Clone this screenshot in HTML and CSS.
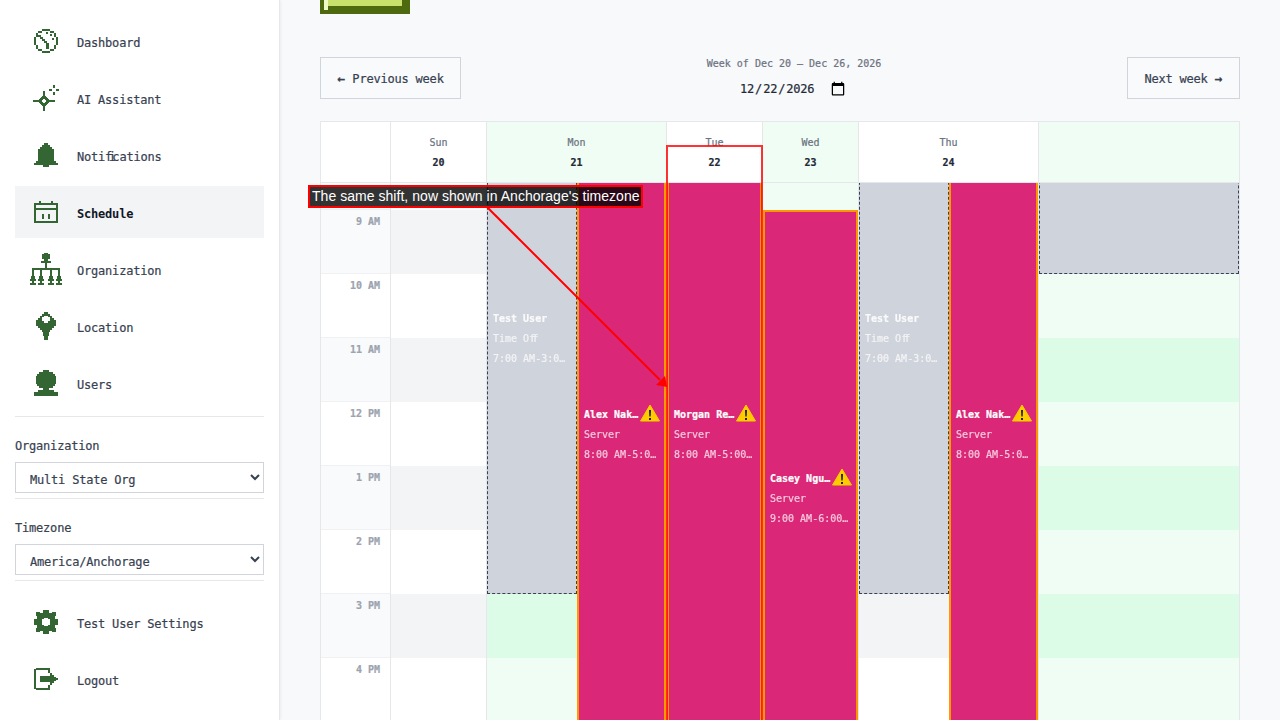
FILE: index.html
```html
<!DOCTYPE html>
<html lang="en">

<head>
  <meta charset="UTF-8" />
  <meta name="viewport" content="width=device-width, initial-scale=1" />
  <title>Schedule</title>
  <link rel="stylesheet" href="styles.css">
</head>

<body>
  <aside class="sidebar">
    <nav class="nav">
      <a class="nav-item" href="#">
        <span class="nav-icon"><svg class="icon" width="24" height="24" viewBox="0 0 24 24"><path d="M8 0h8v2H8zM4 2h4v2H4zM16 2h4v2h-4zM2 4h2v4H2zM20 4h2v4h-2zM0 8h2v8H0zM22 8h2v8h-2zM2 16h2v4H2zM20 16h2v4h-2zM4 20h4v2H4zM16 20h4v2h-4zM8 22h8v2H8zM4 6h3v2H4zM6 8h3v2H6zM8 10h3v2H8zM10 12h3v2h-3zM12 14h3v6h-3zM16 5h2v2h-2zM18 9h2v2h-2zM12 3h2v2h-2z"/></svg></span>
        <span>Dashboard</span>
      </a>
      <a class="nav-item" href="#">
        <span class="nav-icon"><svg class="icon" width="26" height="26" viewBox="0 0 26 26"><path d="M10 6h2v5h1v1h1v1h1v1h1v1h6v2h-6v1h-1v1h-1v1h-1v1h-1v5h-2v-5H9v-1H8v-1H7v-1H6v-1H0v-2h6v-1h1v-1h1v-1h1v-1h1zM20 0h2v3h-2zM20 7h2v3h-2zM16 4h3v2h-3zM23 4h3v2h-3z"/><path class="icon-hole" d="M10 14h2v1h1v2h-1v1h-2v-1H9v-2h1z"/></svg></span>
        <span>AI Assistant</span>
      </a>
      <a class="nav-item" href="#">
        <span class="nav-icon"><svg class="icon" width="24" height="24" viewBox="0 0 24 24"><path d="M10 0h4v2h-4zM8 2h8v2H8zM6 4h12v2H6zM4 6h16v12H4zM2 18h20v2H2zM0 20h24v2H0zM9 22h6v2H9z"/></svg></span>
        <span>Noti<span class="lig">fi</span>cations</span>
      </a>
      <a class="nav-item active" href="#">
        <span class="nav-icon"><svg class="icon" width="24" height="22" viewBox="0 0 24 22"><path d="M5 0h2v3H5zM17 0h2v3h-2zM0 2h24v2H0zM0 4h2v18H0zM22 4h2v18h-2zM2 20h20v2H2zM2 7h20v2H2zM8 13h2v5H8zM14 13h2v5h-2z"/></svg></span>
        <span>Schedule</span>
      </a>
      <a class="nav-item" href="#">
        <span class="nav-icon"><svg class="icon" width="32" height="32" viewBox="0 0 32 32"><path d="M14 0h4v1h-4zM12 1h8v5h-8zM14 6h4v2h-4zM11 8h10v2H11zM15 10h2v5h-2zM2 15h28v2H2zM2 17h2v6H2zM10 17h2v6h-2zM20 17h2v6h-2zM28 17h2v6h-2zM1 23h4v3H1zM0 26h6v2H0zM2 28h2v2H2zM0 30h6v2H0zM9 23h4v3H9zM8 26h6v2H8zM10 28h2v2h-2zM8 30h6v2H8zM19 23h4v3h-4zM18 26h6v2h-6zM20 28h2v2h-2zM18 30h6v2h-6zM27 23h4v3h-4zM26 26h6v2h-6zM28 28h2v2h-2zM26 30h6v2h-6z"/></svg></span>
        <span>Organization</span>
      </a>
      <a class="nav-item" href="#">
        <span class="nav-icon"><svg class="icon" width="20" height="28" viewBox="0 0 20 28"><path fill-rule="evenodd" d="M8 0h4v2h2v2h2v2h2v2h2v6h-2v2h-2v2h-2v2h-1v4h-1v4H8v-4H7v-4H6v-2H4v-2H2v-2H0V8h2V6h2V4h2V2h2zM8 4v1H6v4h2v2h4V9h2V5h-2V4z"/></svg></span>
        <span>Location</span>
      </a>
      <a class="nav-item" href="#">
        <span class="nav-icon"><svg class="icon" width="24" height="26" viewBox="0 0 24 26"><path d="M9 0h6v2H9zM5 2h14v2H5zM3 4h18v2H3zM2 6h20v8H2zM3 14h18v2H3zM5 16h14v2H5zM9 18h6v2H9zM4 20h16v2H4zM0 22h24v4H0z"/></svg></span>
        <span>Users</span>
      </a>
    </nav>

    <div class="filter">
      <label class="filter-label" for="org">Organization</label>
      <select class="filter-select" id="org">
        <option>Multi State Org</option>
      </select>
    </div>
    <div class="filter">
      <label class="filter-label" for="tz">Timezone</label>
      <select class="filter-select" id="tz">
        <option>America/Anchorage</option>
      </select>
    </div>

    <nav class="nav nav-bottom">
      <a class="nav-item" href="#">
        <span class="nav-icon"><svg class="icon" width="24" height="24" viewBox="0 0 24 24"><path fill-rule="evenodd" d="M9 0h6v3h3V2h4v4h-1v3h3v6h-3v3h1v4h-4v-1h-3v3H9v-3H6v1H2v-4h1v-3H0V9h3V6H2V2h4v1h3zM10 8v1H8v6h2v1h4v-1h2V9h-2V8z"/></svg></span>
        <span>Test User Settings</span>
      </a>
      <a class="nav-item" href="#">
        <span class="nav-icon"><svg class="icon" width="24" height="22" viewBox="0 0 24 22"><path d="M2 0h14v2H2zM0 1h2v20H0zM2 20h14v2H2zM14 2h2v3h-2zM14 17h2v3h-2zM6 8h10v6H6zM16 5h2v12h-2zM18 7h2v8h-2zM20 9h2v4h-2zM22 10h2v2h-2z"/></svg></span>
        <span>Logout</span>
      </a>
    </nav>
  </aside>

  <main class="main">
    <svg class="logo" width="90" height="14" viewBox="0 0 90 14">
      <rect width="90" height="14" fill="#4d6a0f" />
      <rect x="4" width="4" height="10" fill="#f2f9c9" />
      <rect x="8" width="74" height="6" fill="#c8e06c" />
    </svg>

    <div class="toolbar">
      <button class="week-btn"><span class="arrow">←</span> Previous week</button>
      <div class="week-picker">
        <div class="week-label">Week of Dec 20 – Dec 26, 2026</div>
        <input class="week-date" type="date" value="2026-12-22" />
      </div>
      <button class="week-btn">Next week <span class="arrow">→</span></button>
    </div>

    <section class="calendar">
      <div class="cal-head">
        <div class="head-cell"></div>
        <div class="head-cell">
          <span class="head-day">Sun</span><span class="head-num">20</span>
        </div>
        <div class="head-cell green">
          <span class="head-day">Mon</span><span class="head-num">21</span>
        </div>
        <div class="head-cell">
          <span class="head-day">Tue</span><span class="head-num">22</span>
        </div>
        <div class="head-cell green">
          <span class="head-day">Wed</span><span class="head-num">23</span>
        </div>
        <div class="head-cell">
          <span class="head-day">Thu</span><span class="head-num">24</span>
        </div>
        <div class="head-cell green"></div>
      </div>

      <div class="cal-body">
        <div class="cal-scroll">
          <div class="times">
            <div class="time-slot"></div>
            <div class="time-slot">9 AM</div>
            <div class="time-slot">10 AM</div>
            <div class="time-slot">11 AM</div>
            <div class="time-slot">12 PM</div>
            <div class="time-slot">1 PM</div>
            <div class="time-slot">2 PM</div>
            <div class="time-slot">3 PM</div>
            <div class="time-slot">4 PM</div>
          </div>

          <div class="day"></div>

          <div class="day green">
            <div class="event off left-half off-morning">
              <span class="ev-name">Test User</span>
              <span class="ev-line">Time O<span class="lig">ff</span></span>
              <span class="ev-line">7:00 AM-3:0…</span>
            </div>
            <div class="event shift right-half shift-eight">
              <div class="ev-head">
                <span class="ev-name">Alex Nak…</span>
                <svg class="warn" width="20" height="18" viewBox="0 0 20 18"><path d="M10 1 19.5 17H.5z" fill="#ffcc00" stroke="#ffcc00" stroke-linejoin="round" /><path d="M9 6h2l-.3 6.500H9.300zM9 14h2v2H9z" fill="#222" /></svg>
              </div>
              <span class="ev-line">Server</span>
              <span class="ev-line">8:00 AM-5:0…</span>
            </div>
          </div>

          <div class="day">
            <div class="event shift whole shift-eight">
              <div class="ev-head">
                <span class="ev-name">Morgan Re…</span>
                <svg class="warn" width="20" height="18" viewBox="0 0 20 18"><path d="M10 1 19.5 17H.5z" fill="#ffcc00" stroke="#ffcc00" stroke-linejoin="round" /><path d="M9 6h2l-.3 6.500H9.300zM9 14h2v2H9z" fill="#222" /></svg>
              </div>
              <span class="ev-line">Server</span>
              <span class="ev-line">8:00 AM-5:00…</span>
            </div>
          </div>

          <div class="day green">
            <div class="event shift whole shift-nine">
              <div class="ev-head">
                <span class="ev-name">Casey Ngu…</span>
                <svg class="warn" width="20" height="18" viewBox="0 0 20 18"><path d="M10 1 19.5 17H.5z" fill="#ffcc00" stroke="#ffcc00" stroke-linejoin="round" /><path d="M9 6h2l-.3 6.500H9.300zM9 14h2v2H9z" fill="#222" /></svg>
              </div>
              <span class="ev-line">Server</span>
              <span class="ev-line">9:00 AM-6:00…</span>
            </div>
          </div>

          <div class="day">
            <div class="event off left-half off-morning">
              <span class="ev-name">Test User</span>
              <span class="ev-line">Time O<span class="lig">ff</span></span>
              <span class="ev-line">7:00 AM-3:0…</span>
            </div>
            <div class="event shift right-half shift-eight">
              <div class="ev-head">
                <span class="ev-name">Alex Nak…</span>
                <svg class="warn" width="20" height="18" viewBox="0 0 20 18"><path d="M10 1 19.5 17H.5z" fill="#ffcc00" stroke="#ffcc00" stroke-linejoin="round" /><path d="M9 6h2l-.3 6.500H9.300zM9 14h2v2H9z" fill="#222" /></svg>
              </div>
              <span class="ev-line">Server</span>
              <span class="ev-line">8:00 AM-5:0…</span>
            </div>
          </div>

          <div class="day green day-last">
            <div class="event off full-width off-early"></div>
          </div>
        </div>
      </div>
    </section>
  </main>

  <!-- annotation drawn over the page -->
  <div class="note-box"></div>
  <svg class="note-arrow" width="1280" height="720" viewBox="0 0 1280 720">
    <line x1="487" y1="207" x2="660" y2="380" stroke="#ff0000" stroke-width="2" />
    <polygon points="667,387 656,385 665,376" fill="#ff0000" />
  </svg>
  <div class="note-label">The same shift, now shown in Anchorage's timezone</div>
</body>

</html>
```

FILE: styles.css
```css
* {
  box-sizing: border-box;
}

html,
body {
  height: 720px;
  margin: 0;
  overflow: hidden;
}

body {
  display: flex;
  font-family: "DejaVu Sans Mono", "Liberation Mono", monospace;
  font-size: 12px;
  letter-spacing: -0.2px;
  -webkit-text-stroke: 0.2px;
  color: #374151;
  background-color: #f8f9fb;
}

.lig {
  letter-spacing: -0.3em;
}

/* sidebar */
.sidebar {
  width: 280px;
  height: 720px;
  flex-shrink: 0;
  padding: 15px 15px 0;
  background-color: #fff;
  border-right: 1px solid #e5e7eb;
  box-shadow: 1px 0 3px rgba(0, 0, 0, 0.05);
}

.nav {
  display: flex;
  flex-direction: column;
  gap: 5px;
}

.nav-bottom {
  margin-top: 15px;
}

.nav-item {
  display: flex;
  align-items: center;
  gap: 15px;
  height: 52px;
  padding-left: 15px;
  padding-top: 4px;
  color: #374151;
  text-decoration: none;
}

.nav-item.active {
  background-color: #f3f4f6;
  color: #111827;
  font-weight: bold;
  -webkit-text-stroke: 0;
}

.nav-icon {
  display: flex;
  justify-content: center;
  align-items: center;
  width: 32px;
  margin-top: -4px;
}

.icon {
  fill: #336633;
  shape-rendering: crispEdges;
}

.icon-hole {
  fill: #fff;
}

.filter {
  margin-top: 7px;
  padding: 21px 0 5px;
  border-top: 1px solid #e5e7eb;
}

.filter + .filter {
  margin-top: 0;
  border-bottom: 1px solid #e5e7eb;
}

.filter-label {
  display: block;
  height: 14px;
  line-height: 16px;
  margin-bottom: 10px;
}

.filter-select {
  display: block;
  width: 100%;
  height: 31px;
  padding: 4px 10px 0;
  font-family: inherit;
  font-size: 12px;
  letter-spacing: inherit;
  -webkit-text-stroke: inherit;
  color: #374151;
  background-color: #fff;
  border: 1px solid #d1d5db;
  border-radius: 0;
}

/* main area */
.main {
  flex: 1;
  min-width: 0;
  height: 720px;
  padding: 0 40px;
  overflow: hidden;
}

.logo {
  display: block;
}

.toolbar {
  display: flex;
  justify-content: space-between;
  align-items: flex-start;
  height: 42px;
  margin: 43px 0 22px;
}

.week-btn {
  height: 42px;
  padding: 0 16.5px;
  font-family: inherit;
  font-size: 12px;
  letter-spacing: inherit;
  -webkit-text-stroke: inherit;
  color: #374151;
  background-color: #f9fafb;
  border: 1px solid #d1d5db;
}

.arrow {
  font-size: 13px;
  font-weight: bold;
  letter-spacing: 0;
}

.week-picker {
  display: flex;
  flex-direction: column;
  align-items: center;
}

.week-label {
  margin-top: 1px;
  font-size: 10px;
  line-height: 12px;
  letter-spacing: 0;
  color: #6b7280;
}

.week-date {
  margin: 7px 3px 0 0;
  height: 24px;
  padding: 0;
  font-family: inherit;
  font-size: 12px;
  letter-spacing: inherit;
  -webkit-text-stroke: inherit;
  color: #1f2937;
  background: transparent;
  border: none;
}

.week-date::-webkit-calendar-picker-indicator {
  width: 16px;
  height: 16px;
  margin-left: 0;
  padding: 0;
  filter: contrast(3);
}

/* calendar */
.calendar {
  border: 1px solid #e5e7eb;
  border-bottom: none;
  letter-spacing: 0;
}

.cal-head {
  display: grid;
  grid-template-columns: 70px 96px 180px 96px 96px 180px 200px;
  height: 61px;
  border-bottom: 1px solid #e5e7eb;
  background-color: #fff;
}

.head-cell {
  display: flex;
  flex-direction: column;
  align-items: center;
  padding-top: 14px;
  border-right: 1px solid #e5e7eb;
  font-size: 10px;
}

.head-cell:last-child {
  border-right: none;
}

.head-cell.green {
  background-color: #f0fdf4;
}

.head-day {
  line-height: 14px;
  color: #6b7280;
}

.head-num {
  margin-top: 6px;
  line-height: 14px;
  font-weight: bold;
  color: #1f2937;
}

.cal-body {
  height: 540px;
  overflow: hidden;
}

.cal-scroll {
  display: grid;
  grid-template-columns: 70px 96px 180px 96px 96px 180px 200px;
  height: 640px;
  margin-top: -37px;
}

.times {
  border-right: 1px solid #e5e7eb;
  background-color: #fff;
}

.time-slot {
  height: 64px;
  padding: 6px 10px 0 0;
  border-bottom: 1px solid #f0f1f3;
  font-size: 10px;
  font-weight: bold;
  line-height: 12px;
  text-align: right;
  color: #9ca3af;
}

.time-slot:nth-child(even) {
  background-color: #f9fafb;
}

.day {
  position: relative;
  border-right: 1px solid #e5e7eb;
  background: repeating-linear-gradient(to bottom, #fff 0 64px, #f3f4f6 64px 128px);
}

.day.green {
  background: repeating-linear-gradient(to bottom, #f0fdf4 0 64px, #dcfce7 64px 128px);
}

.day-last {
  border-right: none;
}

/* events */
.event {
  position: absolute;
  display: flex;
  flex-direction: column;
  justify-content: center;
  padding-top: 2px;
  font-size: 10px;
  line-height: 20px;
  color: #fff;
}

.shift {
  padding-left: 5px;
  padding-right: 4px;
  background-color: #db2777;
  border: 2px solid #ff9800;
}

.off {
  padding-left: 5px;
  background-color: #cfd3db;
  border: 1px dashed #374151;
}

.left-half {
  left: 0;
  width: 90px;
}

.right-half {
  left: 90px;
  width: 89px;
}

.whole {
  left: 0;
  width: 95px;
}

.full-width {
  left: 0;
  width: 200px;
}

.shift-eight {
  top: 0;
  height: 576px;
}

.shift-nine {
  top: 64px;
  height: 576px;
}

.off-morning {
  top: -64px;
  height: 512px;
}

.off-early {
  top: -192px;
  height: 320px;
}

.ev-head {
  display: flex;
  align-items: center;
  justify-content: space-between;
}

.ev-name {
  font-weight: bold;
  white-space: nowrap;
}

.ev-line {
  white-space: nowrap;
  opacity: 0.75;
}

.off .ev-name {
  opacity: 0.9;
}

.warn {
  flex-shrink: 0;
  margin-top: -4px;
}

/* annotation */
.note-box {
  position: absolute;
  left: 666px;
  top: 145px;
  width: 97px;
  height: 600px;
  border: 2px solid rgba(255, 0, 0, 0.8);
}

.note-arrow {
  position: absolute;
  left: 0;
  top: 0;
  pointer-events: none;
}

.note-label {
  position: absolute;
  left: 308px;
  top: 185px;
  width: 335px;
  height: 23px;
  padding: 0 2px;
  line-height: 19px;
  border: 2px solid #ff0000;
  background-color: rgba(0, 0, 0, 0.8);
  font-family: "Liberation Sans", Arial, sans-serif;
  font-size: 14px;
  letter-spacing: 0.04px;
  -webkit-text-stroke: 0;
  white-space: nowrap;
  color: #fff;
}
```
